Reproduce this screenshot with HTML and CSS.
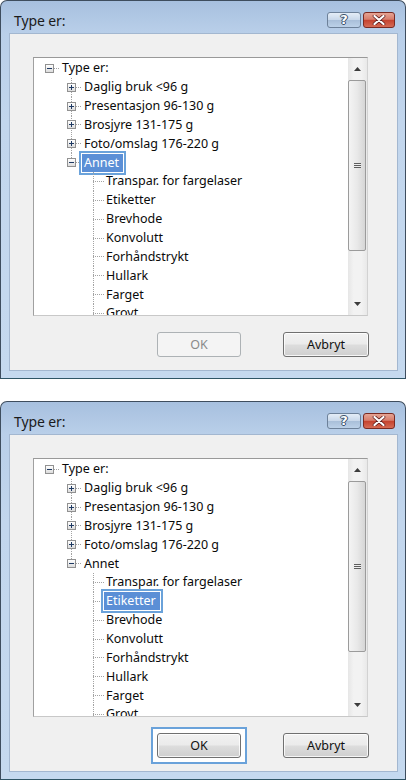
FILE: index.html
```html
<!DOCTYPE html>
<html lang="no">
<head>
<meta charset="utf-8">
<title>Type er:</title>
<link rel="stylesheet" href="styles.css">
</head>
<body>
<div class="page">

  <div class="window">
    <div class="titlebar">
      <span class="title">Type er:</span>
      <div class="caption-buttons">
        <span class="cap cap-help">?</span>
        <span class="cap cap-close"><svg width="14" height="10" viewBox="0 0 14 10"><path d="M2.5 1 L11.5 9 M11.5 1 L2.5 9" stroke="#5a1a1a" stroke-width="3.6" stroke-linecap="round"/><path d="M2.5 1 L11.5 9 M11.5 1 L2.5 9" stroke="#fff" stroke-width="2.2" stroke-linecap="round"/></svg></span>
      </div>
    </div>
    <div class="client">
      <div class="tree">
        <div class="tree-list">
          <div class="row"><span class="cell exp root"><span class="box minus"></span></span><span class="label">Type er:</span></div>
          <div class="row"><span class="cell"></span><span class="cell exp pipe"><span class="box plus"></span></span><span class="label">Daglig bruk &lt;96 g</span></div>
          <div class="row"><span class="cell"></span><span class="cell exp pipe"><span class="box plus"></span></span><span class="label">Presentasjon 96-130 g</span></div>
          <div class="row"><span class="cell"></span><span class="cell exp pipe"><span class="box plus"></span></span><span class="label">Brosjyre 131-175 g</span></div>
          <div class="row"><span class="cell"></span><span class="cell exp pipe"><span class="box plus"></span></span><span class="label">Foto/omslag 176-220 g</span></div>
          <div class="row"><span class="cell"></span><span class="cell exp ell"><span class="box minus"></span></span><span class="label sel">Annet</span></div>
          <div class="row"><span class="cell"></span><span class="cell"></span><span class="cell tee"></span><span class="label">Transpar. for fargelaser</span></div>
          <div class="row"><span class="cell"></span><span class="cell"></span><span class="cell tee"></span><span class="label">Etiketter</span></div>
          <div class="row"><span class="cell"></span><span class="cell"></span><span class="cell tee"></span><span class="label">Brevhode</span></div>
          <div class="row"><span class="cell"></span><span class="cell"></span><span class="cell tee"></span><span class="label">Konvolutt</span></div>
          <div class="row"><span class="cell"></span><span class="cell"></span><span class="cell tee"></span><span class="label">Forhåndstrykt</span></div>
          <div class="row"><span class="cell"></span><span class="cell"></span><span class="cell tee"></span><span class="label">Hullark</span></div>
          <div class="row"><span class="cell"></span><span class="cell"></span><span class="cell tee"></span><span class="label">Farget</span></div>
          <div class="row"><span class="cell"></span><span class="cell"></span><span class="cell tee"></span><span class="label">Grovt</span></div>
        </div>
        <div class="scrollbar">
          <div class="sb-arrow"><svg width="7" height="4" viewBox="0 0 7 4"><polygon points="0,4 7,4 3.5,0" fill="#3c3c3c"/></svg></div>
          <div class="sb-thumb"><span class="grip"></span></div>
          <div class="sb-track"></div>
          <div class="sb-arrow"><svg width="7" height="4" viewBox="0 0 7 4"><polygon points="0,0 7,0 3.5,4" fill="#3c3c3c"/></svg></div>
        </div>
      </div>
      <div class="buttons">
        <span class="btn btn-ok disabled">OK</span>
        <span class="btn btn-cancel">Avbryt</span>
      </div>
    </div>
  </div>

  <div class="window">
    <div class="titlebar">
      <span class="title">Type er:</span>
      <div class="caption-buttons">
        <span class="cap cap-help">?</span>
        <span class="cap cap-close"><svg width="14" height="10" viewBox="0 0 14 10"><path d="M2.5 1 L11.5 9 M11.5 1 L2.5 9" stroke="#5a1a1a" stroke-width="3.6" stroke-linecap="round"/><path d="M2.5 1 L11.5 9 M11.5 1 L2.5 9" stroke="#fff" stroke-width="2.2" stroke-linecap="round"/></svg></span>
      </div>
    </div>
    <div class="client">
      <div class="tree">
        <div class="tree-list">
          <div class="row"><span class="cell exp root"><span class="box minus"></span></span><span class="label">Type er:</span></div>
          <div class="row"><span class="cell"></span><span class="cell exp pipe"><span class="box plus"></span></span><span class="label">Daglig bruk &lt;96 g</span></div>
          <div class="row"><span class="cell"></span><span class="cell exp pipe"><span class="box plus"></span></span><span class="label">Presentasjon 96-130 g</span></div>
          <div class="row"><span class="cell"></span><span class="cell exp pipe"><span class="box plus"></span></span><span class="label">Brosjyre 131-175 g</span></div>
          <div class="row"><span class="cell"></span><span class="cell exp pipe"><span class="box plus"></span></span><span class="label">Foto/omslag 176-220 g</span></div>
          <div class="row"><span class="cell"></span><span class="cell exp ell"><span class="box minus"></span></span><span class="label">Annet</span></div>
          <div class="row"><span class="cell"></span><span class="cell"></span><span class="cell tee"></span><span class="label">Transpar. for fargelaser</span></div>
          <div class="row"><span class="cell"></span><span class="cell"></span><span class="cell tee"></span><span class="label sel">Etiketter</span></div>
          <div class="row"><span class="cell"></span><span class="cell"></span><span class="cell tee"></span><span class="label">Brevhode</span></div>
          <div class="row"><span class="cell"></span><span class="cell"></span><span class="cell tee"></span><span class="label">Konvolutt</span></div>
          <div class="row"><span class="cell"></span><span class="cell"></span><span class="cell tee"></span><span class="label">Forhåndstrykt</span></div>
          <div class="row"><span class="cell"></span><span class="cell"></span><span class="cell tee"></span><span class="label">Hullark</span></div>
          <div class="row"><span class="cell"></span><span class="cell"></span><span class="cell tee"></span><span class="label">Farget</span></div>
          <div class="row"><span class="cell"></span><span class="cell"></span><span class="cell tee"></span><span class="label">Grovt</span></div>
        </div>
        <div class="scrollbar">
          <div class="sb-arrow"><svg width="7" height="4" viewBox="0 0 7 4"><polygon points="0,4 7,4 3.5,0" fill="#3c3c3c"/></svg></div>
          <div class="sb-thumb"><span class="grip"></span></div>
          <div class="sb-track"></div>
          <div class="sb-arrow"><svg width="7" height="4" viewBox="0 0 7 4"><polygon points="0,0 7,0 3.5,4" fill="#3c3c3c"/></svg></div>
        </div>
      </div>
      <div class="buttons">
        <span class="focus-ring"><span class="btn btn-ok">OK</span></span>
        <span class="btn btn-cancel">Avbryt</span>
      </div>
    </div>
  </div>

</div>
</body>
</html>
```

FILE: styles.css
```css
html, body {
  margin: 0;
  padding: 0;
  background: #ffffff;
}

.page {
  width: 406px;
  display: flex;
  flex-direction: column;
  gap: 22px;
  font-family: "Noto Sans", "Open Sans", sans-serif;
  color: #000;
}

.window {
  box-sizing: border-box;
  width: 406px;
  height: 379px;
  border: 1px solid #3e4d5e;
  border-bottom-color: #2f5566;
  border-radius: 7px 7px 0 0;
  background: linear-gradient(#a7c0df 0px, #b9cfe9 32px, #c2d6ed 120px, #c5d9ef 100%);
  padding: 0 7px 7px 8px;
  display: flex;
  flex-direction: column;
}

.titlebar {
  height: 32px;
  display: flex;
  align-items: flex-start;
  justify-content: space-between;
  padding: 0 3px 0 5px;
}

.title {
  font-size: 14px;
  line-height: 16px;
  margin-top: 12px;
  color: #1b1b1b;
  letter-spacing: -0.1px;
}

.caption-buttons {
  display: flex;
  gap: 2px;
  margin-top: 11px;
}

.cap {
  box-sizing: border-box;
  height: 16px;
  display: flex;
  align-items: center;
  justify-content: center;
  border-radius: 3px;
}

.cap-help {
  width: 34px;
  border: 1px solid #6d8199;
  background: linear-gradient(#e4edf7 0%, #c9d8ea 48%, #a9bfd9 52%, #bcd1e8 100%);
  color: #fff;
  font-family: "DejaVu Sans", sans-serif;
  font-weight: bold;
  font-size: 13px;
  line-height: 14px;
  text-shadow: 0 0 1px #2a3e57, 1px 0 0 #3f5671, -1px 0 0 #3f5671, 0 1px 0 #3f5671, 0 -1px 0 #3f5671;
}

.cap-close {
  width: 32px;
  border: 1px solid #7a2a22;
  background: linear-gradient(#e6a494 0%, #d77d6c 45%, #c5432f 52%, #d56b55 100%);
}

.client {
  box-sizing: border-box;
  height: 338px;
  border: 1px solid #a3b7d0;
  background: #f0f0f0;
  padding: 23px 28px 0 23px;
  display: flex;
  flex-direction: column;
}

.tree {
  box-sizing: border-box;
  width: 335px;
  height: 259px;
  border: 1px solid #a0a0a0;
  border-color: #999 #d2d2d2 #c8c8c8 #a0a0a0;
  background: #fff;
  display: flex;
}

.tree-list {
  flex: 1;
  overflow: hidden;
  padding: 1px 0 0 4px;
  font-size: 12.5px;
}

.row {
  height: 18.85px;
  display: flex;
  align-items: center;
  white-space: nowrap;
}

.cell {
  flex: none;
  width: 22px;
  height: 100%;
  display: flex;
  align-items: center;
  justify-content: center;
}

.exp {
  background:
    repeating-linear-gradient(90deg, #a3a3a3 0 1px, transparent 1px 2px) right center / 10px 1px no-repeat;
}
.exp.pipe {
  background:
    repeating-linear-gradient(90deg, #a3a3a3 0 1px, transparent 1px 2px) right center / 10px 1px no-repeat,
    repeating-linear-gradient(180deg, #a3a3a3 0 1px, transparent 1px 2px) 11px 0 / 1px 100% no-repeat;
}
.exp.ell {
  background:
    repeating-linear-gradient(90deg, #a3a3a3 0 1px, transparent 1px 2px) right center / 10px 1px no-repeat,
    repeating-linear-gradient(180deg, #a3a3a3 0 1px, transparent 1px 2px) 11px 0 / 1px 50% no-repeat;
}
.tee {
  background:
    repeating-linear-gradient(90deg, #a3a3a3 0 1px, transparent 1px 2px) right center / 11px 1px no-repeat,
    repeating-linear-gradient(180deg, #a3a3a3 0 1px, transparent 1px 2px) 11px 0 / 1px 100% no-repeat;
}

.box {
  box-sizing: border-box;
  width: 9px;
  height: 9px;
  border: 1px solid #919191;
  background-color: #f4f4f4;
  margin-left: 1px;
}
.box.minus {
  background:
    linear-gradient(#1f3a63, #1f3a63) center / 5px 1px no-repeat,
    linear-gradient(#ffffff, #dcdcdc);
}
.box.plus {
  background:
    linear-gradient(#1f3a63, #1f3a63) center / 5px 1px no-repeat,
    linear-gradient(#1f3a63, #1f3a63) center / 1px 5px no-repeat,
    linear-gradient(#ffffff, #dcdcdc);
}

.label {
  margin-left: 2px;
  line-height: 18px;
  color: #0a0a0a;
}

.label.sel {
  background: #5b8fd6;
  color: #fff;
  padding: 0 4px 0 2px;
  margin-left: 0;
  box-shadow: 0 0 0 1px #ffffff, 0 0 0 3px #6aa2da;
}

.scrollbar {
  flex: none;
  width: 19px;
  display: flex;
  flex-direction: column;
  background: linear-gradient(90deg, #e6e6e6, #f2f2f2 30%, #f2f2f2 70%, #e9e9e9);
}

.sb-arrow {
  height: 22px;
  display: flex;
  align-items: center;
  justify-content: center;
  flex: none;
}

.sb-thumb {
  box-sizing: border-box;
  height: 171px;
  margin: 0 1px 0 0;
  border: 1px solid #9b9b9b;
  border-radius: 2px;
  background: linear-gradient(90deg, #f4f4f4 0%, #e9e9e9 50%, #d6d6d6 100%);
  display: flex;
  align-items: center;
  justify-content: center;
  flex: none;
}

.grip {
  width: 7px;
  height: 5px;
  background: repeating-linear-gradient(180deg, #5e5e5e 0 1px, #eeeeee 1px 2px);
}

.sb-track {
  flex: 1;
}

.buttons {
  display: flex;
  justify-content: flex-end;
  align-items: flex-start;
  gap: 42px;
  margin-top: 16px;
  width: 336px;
}

.btn {
  box-sizing: border-box;
  height: 25px;
  display: flex;
  align-items: center;
  justify-content: center;
  border: 1px solid #707070;
  border-radius: 3px;
  background: linear-gradient(#f2f2f2 0%, #ebebeb 48%, #dddddd 52%, #cfcfcf 100%);
  box-shadow: inset 0 0 0 1px rgba(255,255,255,0.8);
  font-size: 12.5px;
  color: #111;
}

.btn-ok { width: 84px; }
.btn-cancel { width: 86px; }

.btn.disabled {
  border-color: #adb2b5;
  background: #f4f4f4;
  box-shadow: none;
  color: #8a8a8a;
}

.focus-ring {
  display: flex;
  margin: -6px;
  padding: 4px;
  border: 2px solid #6aa2da;
  background: #ffffff;
}
```
